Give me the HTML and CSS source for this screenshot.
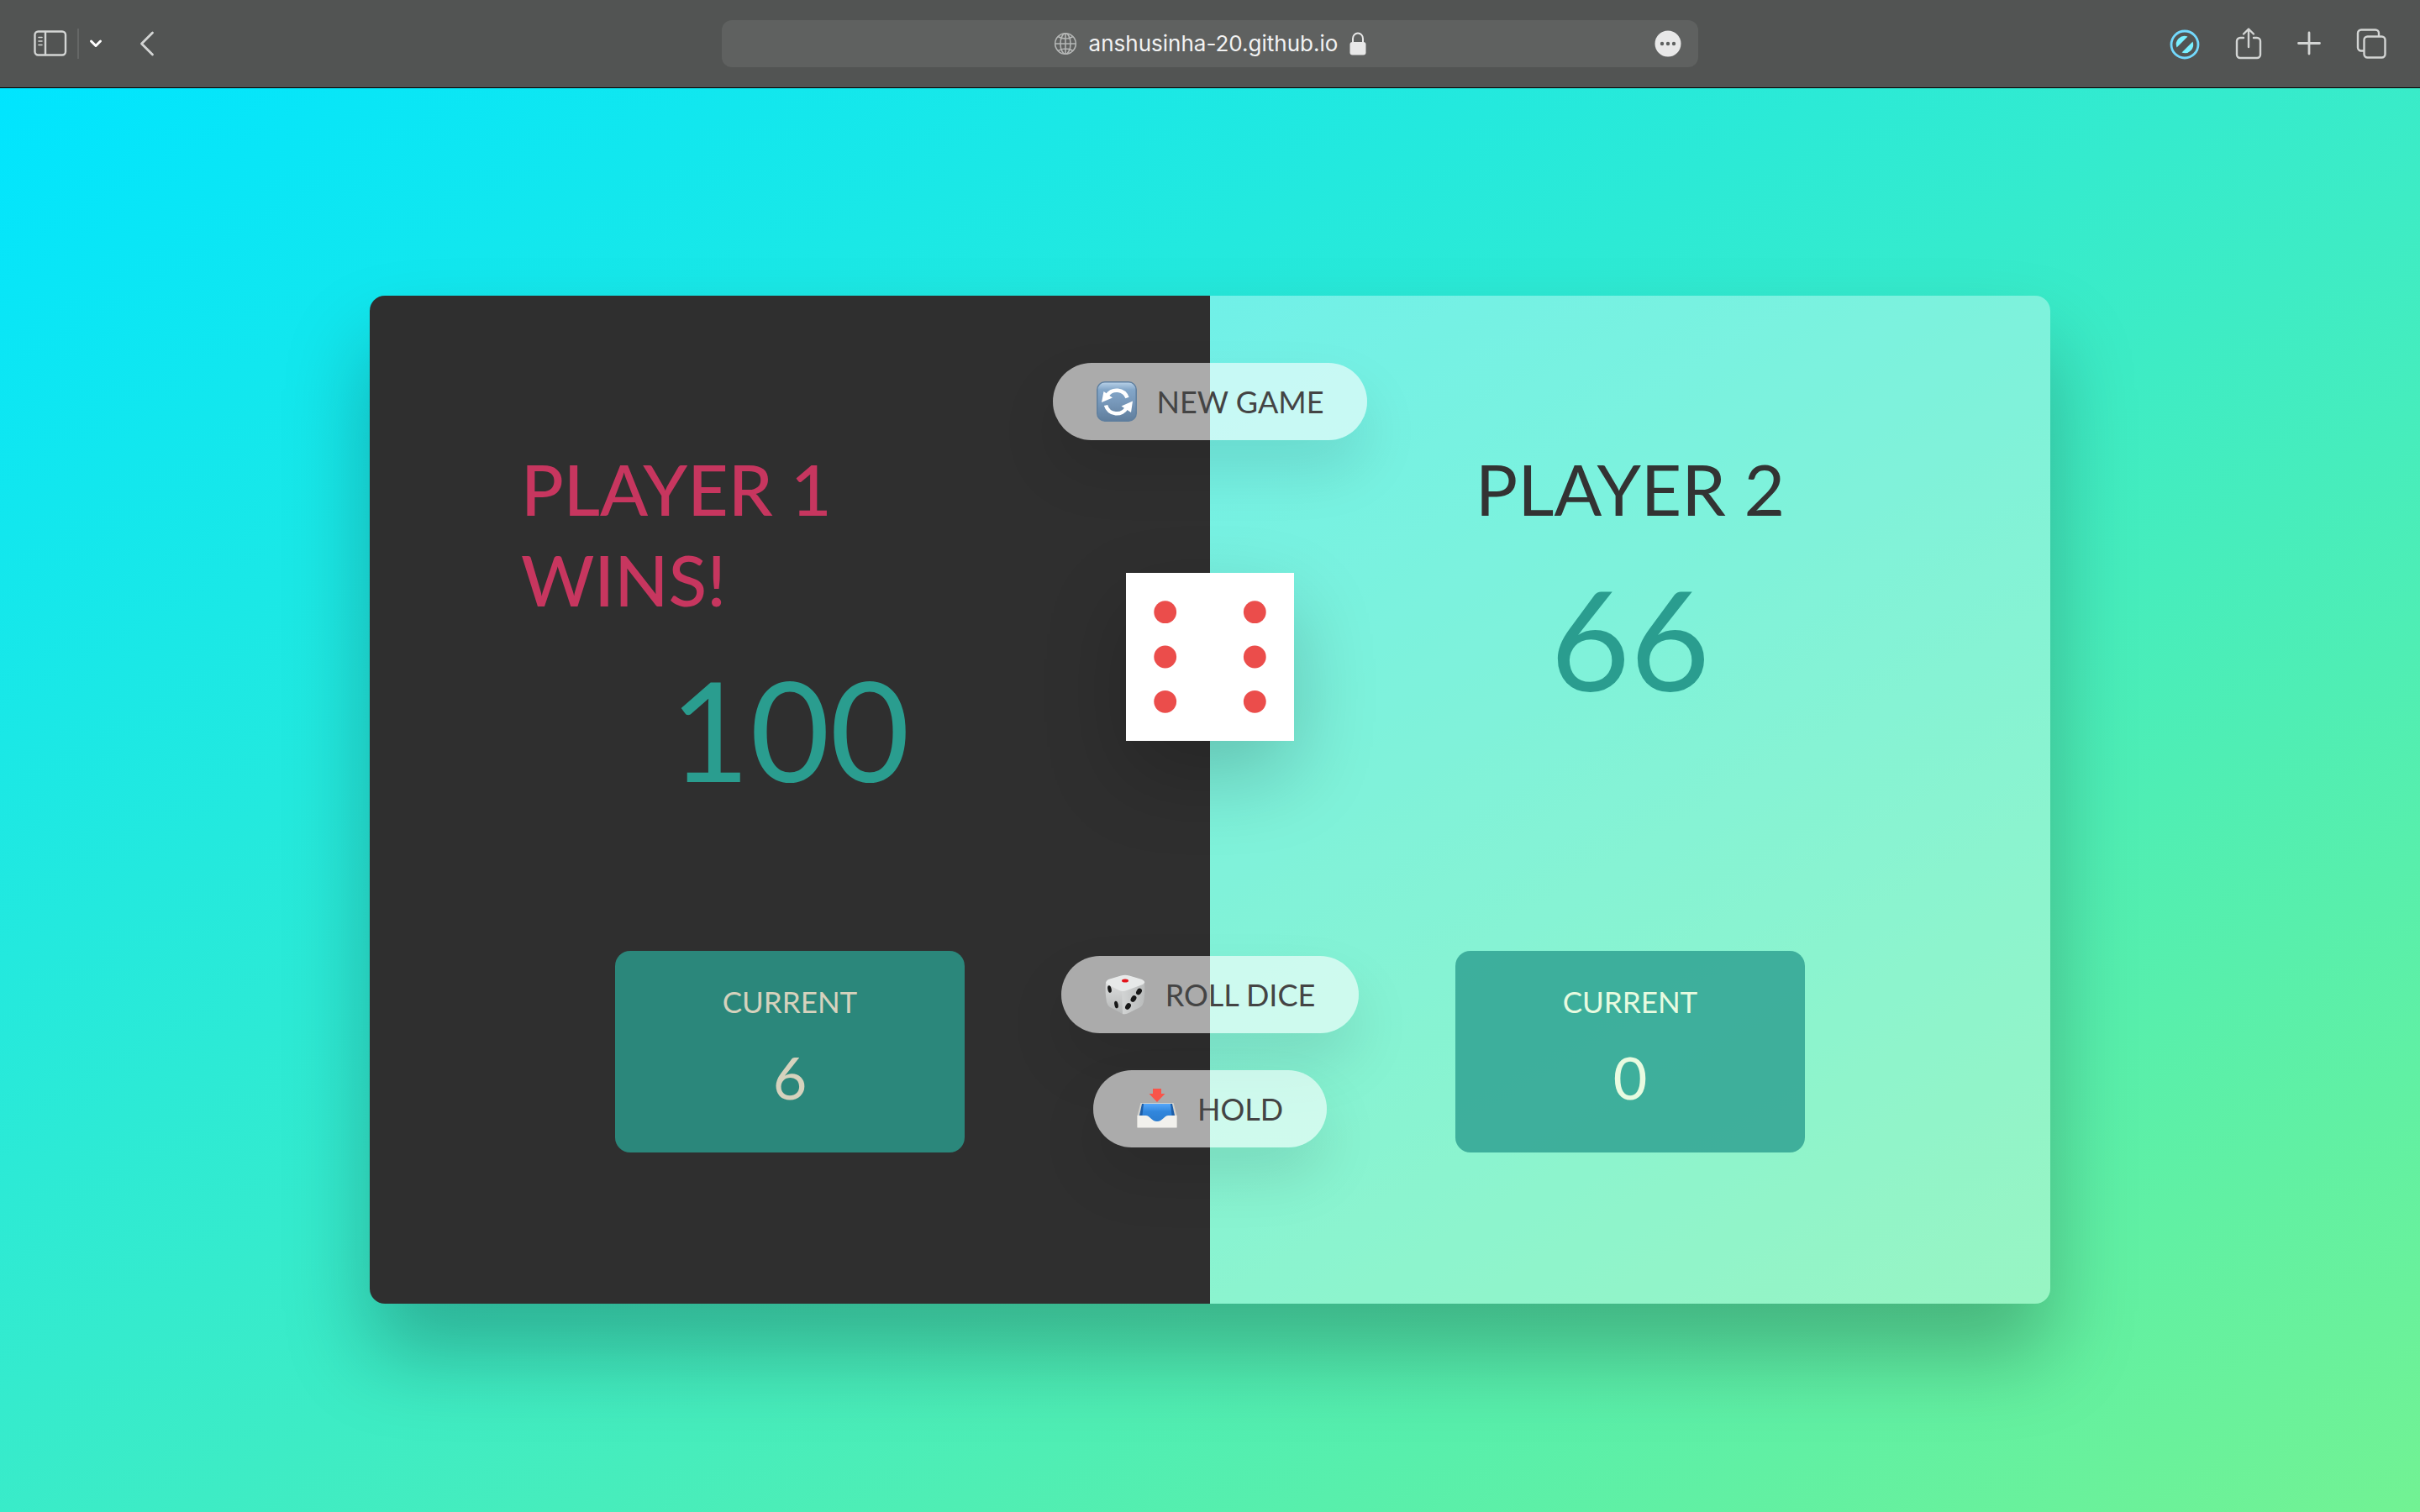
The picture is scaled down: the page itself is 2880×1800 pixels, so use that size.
FILE: index.html
```html
<!DOCTYPE html>
<html lang="en">
<head>
<meta charset="utf-8">
<title>Pig Game</title>
<link rel="stylesheet" href="styles.css">
</head>
<body>
<header class="toolbar">
  <div class="tools">
    <button class="tool" aria-label="Sidebar"><svg width="40" height="32" viewBox="0 0 40 32" fill="none" stroke="#d3d5d4" stroke-width="2.4" stroke-linecap="round"><rect x="1.5" y="1.5" width="36.500" height="28" rx="4"/><path d="M14 2v27"/><path stroke-width="1.600" d="M6 8.500h4M6 13h4M6 17.500h4"/></svg></button>
    <span class="divider"></span>
    <button class="tool tool-menu" aria-label="Tab groups"><svg width="16" height="12" viewBox="0 0 16 12" fill="none" stroke="#fff" stroke-width="3" stroke-linecap="round" stroke-linejoin="round"><path d="M2.500 3l5.500 5.500L13.500 3"/></svg></button>
    <button class="tool" aria-label="Back"><svg width="18" height="30" viewBox="0 0 18 30" fill="none" stroke="#d3d5d4" stroke-width="2.800" stroke-linecap="round" stroke-linejoin="round"><path d="M15.500 2L2.500 15l13 13"/></svg></button>
  </div>
  <div class="address">
    <a class="site" href="#"><svg width="28" height="28" viewBox="0 0 28 28" fill="none" stroke="#b4b6b5" stroke-width="1.600"><circle cx="14" cy="14" r="12.300"/><ellipse cx="14" cy="14" rx="6" ry="12.300"/><path d="M14 1.700v24.600M1.700 14h24.600M5 5.500q9 5 18 0M5 22.500q9-5 18 0"/></svg><span class="host">anshusinha-20.github.io</span><svg width="20" height="28" viewBox="0 0 20 28"><rect x="0.500" y="12" width="19" height="15.500" rx="3" fill="#e8e8e8"/><path d="M4 13V8a6 6.500 0 0 1 12 0v5" fill="none" stroke="#e8e8e8" stroke-width="2"/></svg></a>
    <button class="tool more" aria-label="Page menu"><svg width="32" height="32" viewBox="0 0 32 32"><circle cx="16" cy="16" r="15.500" fill="#e8e8e8"/><g fill="#5f6160"><circle cx="9" cy="16" r="2.200"/><circle cx="16" cy="16" r="2.200"/><circle cx="23" cy="16" r="2.200"/></g></svg></button>
  </div>
  <div class="tools tools-right">
    <button class="tool" aria-label="Content blocker"><svg width="36" height="40" viewBox="0 0 36 40"><circle cx="18" cy="21" r="16" fill="none" stroke="#73d9fd" stroke-width="2.800"/><path fill="#79f0ff" d="M8.500 24.500A10 10 0 0 1 21.500 11.600zM27.500 17.500A10 10 0 0 1 14.500 30.400z"/></svg></button>
    <button class="tool" aria-label="Share"><svg width="32" height="40" viewBox="0 0 32 40" fill="none" stroke="#d3d5d4" stroke-width="2.400" stroke-linecap="round" stroke-linejoin="round"><path d="M10 13H6a4 4 0 0 0-4 4v16a4 4 0 0 0 4 4h20a4 4 0 0 0 4-4V17a4 4 0 0 0-4-4h-4M16 24V3M10 8.500L16 2.500l6 6"/></svg></button>
    <button class="tool" aria-label="New tab"><svg width="28" height="40" viewBox="0 0 28 40" stroke="#d3d5d4" stroke-width="2.800" stroke-linecap="round"><path d="M14 7v25M1.500 19.500h25"/></svg></button>
    <button class="tool" aria-label="Tab overview"><svg width="36" height="40" viewBox="0 0 36 40" fill="none" stroke="#d3d5d4" stroke-width="2.400"><rect x="9.500" y="11.500" width="25" height="25" rx="4"/><path d="M9 28.500H6a4 4 0 0 1-4-4V7.500a4 4 0 0 1 4-4h17a4 4 0 0 1 4 4v3.500"/></svg></button>
  </div>
</header>
<div class="stage">
  <main class="game">
    <section class="player winner">
      <h2 class="name">PLAYER 1<br>WINS!</h2>
      <p class="score">100</p>
      <div class="current"><p class="current-label">CURRENT</p><p class="current-score">6</p></div>
    </section>
    <section class="player">
      <h2 class="name">PLAYER 2</h2>
      <p class="score">66</p>
      <div class="current"><p class="current-label">CURRENT</p><p class="current-score">0</p></div>
    </section>
    <div class="controls">
      <button class="btn">
        <svg width="48" height="48" viewBox="0 0 48 48"><defs><linearGradient id="tile" x2="0" y2="1"><stop offset="0" stop-color="#b9d2e8"/><stop offset=".2" stop-color="#83a6c8"/><stop offset=".5" stop-color="#7899bb"/><stop offset="1" stop-color="#5f7d9c"/></linearGradient></defs><rect x=".8" y=".8" width="46.400" height="46.400" rx="9" fill="url(#tile)" stroke="#5f7f9f" stroke-width="1.500"/><g fill="none" stroke="#fff" stroke-width="4.500"><path d="M36.500 19.500A13.500 13.500 0 0 0 12.500 17"/><path d="M11 28.500A13.500 13.500 0 0 0 36 31"/></g><path fill="#fff" d="M8.500 12L6 25l13-5.500zM43 23.500L29.500 29.500 41 37z"/></svg>
        NEW GAME
      </button>
      <svg class="dice" width="200" height="200" viewBox="0 0 200 200" role="img" aria-label="Dice showing six"><rect width="200" height="200" fill="#fff"/><g fill="#eb4d4b"><circle cx="46.700" cy="46.700" r="13.400"/><circle cx="46.700" cy="100" r="13.400"/><circle cx="46.700" cy="153.300" r="13.400"/><circle cx="153.300" cy="46.700" r="13.400"/><circle cx="153.300" cy="100" r="13.400"/><circle cx="153.300" cy="153.300" r="13.400"/></g></svg>
      <button class="btn">
        <svg width="48" height="48" viewBox="0 0 48 48"><defs><linearGradient id="left" x2="0" y2="1"><stop offset="0" stop-color="#dcdddd"/><stop offset="1" stop-color="#b4b6b6"/></linearGradient><linearGradient id="right"><stop offset="0" stop-color="#d2d4d4"/><stop offset="1" stop-color="#b9bbbb"/></linearGradient></defs><path fill="url(#left)" d="M1 9Q0 22 2 33q1 4 4 6l13 7q3 2 5 1l-2-31z"/><path fill="url(#right)" d="M47 9q1 14-1 24-1 4-4 6l-14 7q-4 2-7 1l-1-31z"/><path fill="#e7e9e9" d="M19 1.500q5-1.500 10 0l15 4.500q6 3 1 6l-19 7q-5 2-9 0L3 12q-4-3 1-6z"/><ellipse cx="24" cy="7.500" rx="4" ry="2" fill="#e3141b"/><g fill="#171717"><ellipse cx="5.500" cy="17.500" rx="2.200" ry="4.400" transform="rotate(-12 5.500 17.500)"/><ellipse cx="13.500" cy="36" rx="2.200" ry="4.400" transform="rotate(-12 13.500 36)"/><ellipse cx="40.500" cy="20.500" rx="3" ry="4.200" transform="rotate(32 40.500 20.500)"/><ellipse cx="34" cy="29" rx="3" ry="4.200" transform="rotate(32 34 29)"/><ellipse cx="27.500" cy="38" rx="3" ry="4.200" transform="rotate(32 27.500 38)"/></g></svg>
        ROLL DICE
      </button>
      <button class="btn">
        <svg width="48" height="48" viewBox="0 0 48 48"><defs><linearGradient id="tray" x2="0" y2="1"><stop offset="0" stop-color="#55a7fb"/><stop offset=".45" stop-color="#3186dc"/><stop offset="1" stop-color="#2c7dd0"/></linearGradient></defs><path fill="#d3d2cc" d="M4.500 17h39L47.500 32v14h-47V32z"/><path fill="#1d5ea8" d="M6 18h36l3 14v7H3v-7z"/><path fill="url(#tray)" d="M8 18h32l1.500 14v7h-35v-7z"/><path fill="#f2f1ed" d="M.5 32h10c5 0 7 7 13.500 7s8.500-7 13.500-7h10v14.500H.500z"/><path fill="#f9554a" d="M19 0h10v6h4.500L24 16 14.500 6H19z"/></svg>
        HOLD
      </button>
    </div>
  </main>
</div>
</body>
</html>
```
FILE: styles.css
```css
* { box-sizing: border-box; margin: 0; padding: 0; }
body {
  min-height: 100vh;
  display: flex;
  flex-direction: column;
  font-family: Lato, "Liberation Sans", sans-serif;
  color: #333;
}
button { border: 0; background: none; font: inherit; cursor: pointer; }
svg { display: block; flex: none; }

.toolbar {
  display: grid;
  grid-template-columns: 1fr 1162px 1fr;
  align-items: center;
  height: 105px;
  padding: 0 40px;
  background: #525453;
  border-bottom: 1px solid #000;
}
.tools { display: flex; align-items: center; }
.divider { width: 2px; height: 36px; margin: 0 12px; background: #656766; }
.tool-menu { margin-right: 44px; }
.tools-right { justify-content: flex-end; gap: 42px; }
.address {
  display: flex;
  align-items: center;
  height: 56px;
  padding: 0 20px 0 52px;
  border-radius: 12px;
  background: #5f6160;
}
.site {
  flex: 1;
  display: flex;
  align-items: center;
  justify-content: center;
  gap: 14px;
  color: #f2f2f2;
  text-decoration: none;
}
.host { font: 26px/32px Inter, "Liberation Sans", sans-serif; }

.stage {
  flex: 1;
  display: flex;
  align-items: center;
  justify-content: center;
  padding: 40px 40px 42px;
  background: linear-gradient(to bottom right, #00e5ff, #72f293);
}
.game {
  position: relative;
  display: flex;
  width: 100%;
  max-width: 2000px;
  min-height: 1200px;
  border-radius: 18px;
  overflow: hidden;
  box-shadow: 0 60px 100px rgba(0, 0, 0, 0.25);
}
.player {
  flex: 1;
  display: flex;
  flex-direction: column;
  align-items: center;
  padding: 176px 180px 180px;
  background: rgba(255, 255, 255, 0.35);
}
.winner { background: #2f2f2f; }
.name { margin-bottom: 24px; font-size: 84px; line-height: 108px; font-weight: 400; }
.winner .name { width: 100%; color: #c7365f; font-weight: 500; }
.score { font-size: 164px; line-height: 200px; color: #2a9d8f; }
.current {
  width: 65%;
  margin-top: auto;
  padding: 40px 0 48px;
  border-radius: 18px;
  background: rgba(42, 157, 143, 0.8);
  color: #e8fbe0;
  text-align: center;
}
.winner .current { background: #2b877b; color: #d6d2bd; }
.current-label { margin-bottom: 28px; font-size: 35px; line-height: 40px; }
.current-score { font-size: 70px; line-height: 84px; }

.controls {
  position: absolute;
  inset: 0;
  display: flex;
  flex-direction: column;
  align-items: center;
  padding: 80px 0 186px;
}
.btn {
  display: flex;
  align-items: center;
  gap: 24px;
  height: 92px;
  padding: 0 52px;
  border-radius: 46px;
  background: rgba(255, 255, 255, 0.6);
  box-shadow: 0 35px 70px rgba(0, 0, 0, 0.1);
  color: #444;
  font-size: 36px;
  line-height: 48px;
}
.dice { margin: 158px 0 auto; box-shadow: 0 40px 100px rgba(0, 0, 0, 0.2); }
.btn + .btn { margin-top: 44px; }
```
